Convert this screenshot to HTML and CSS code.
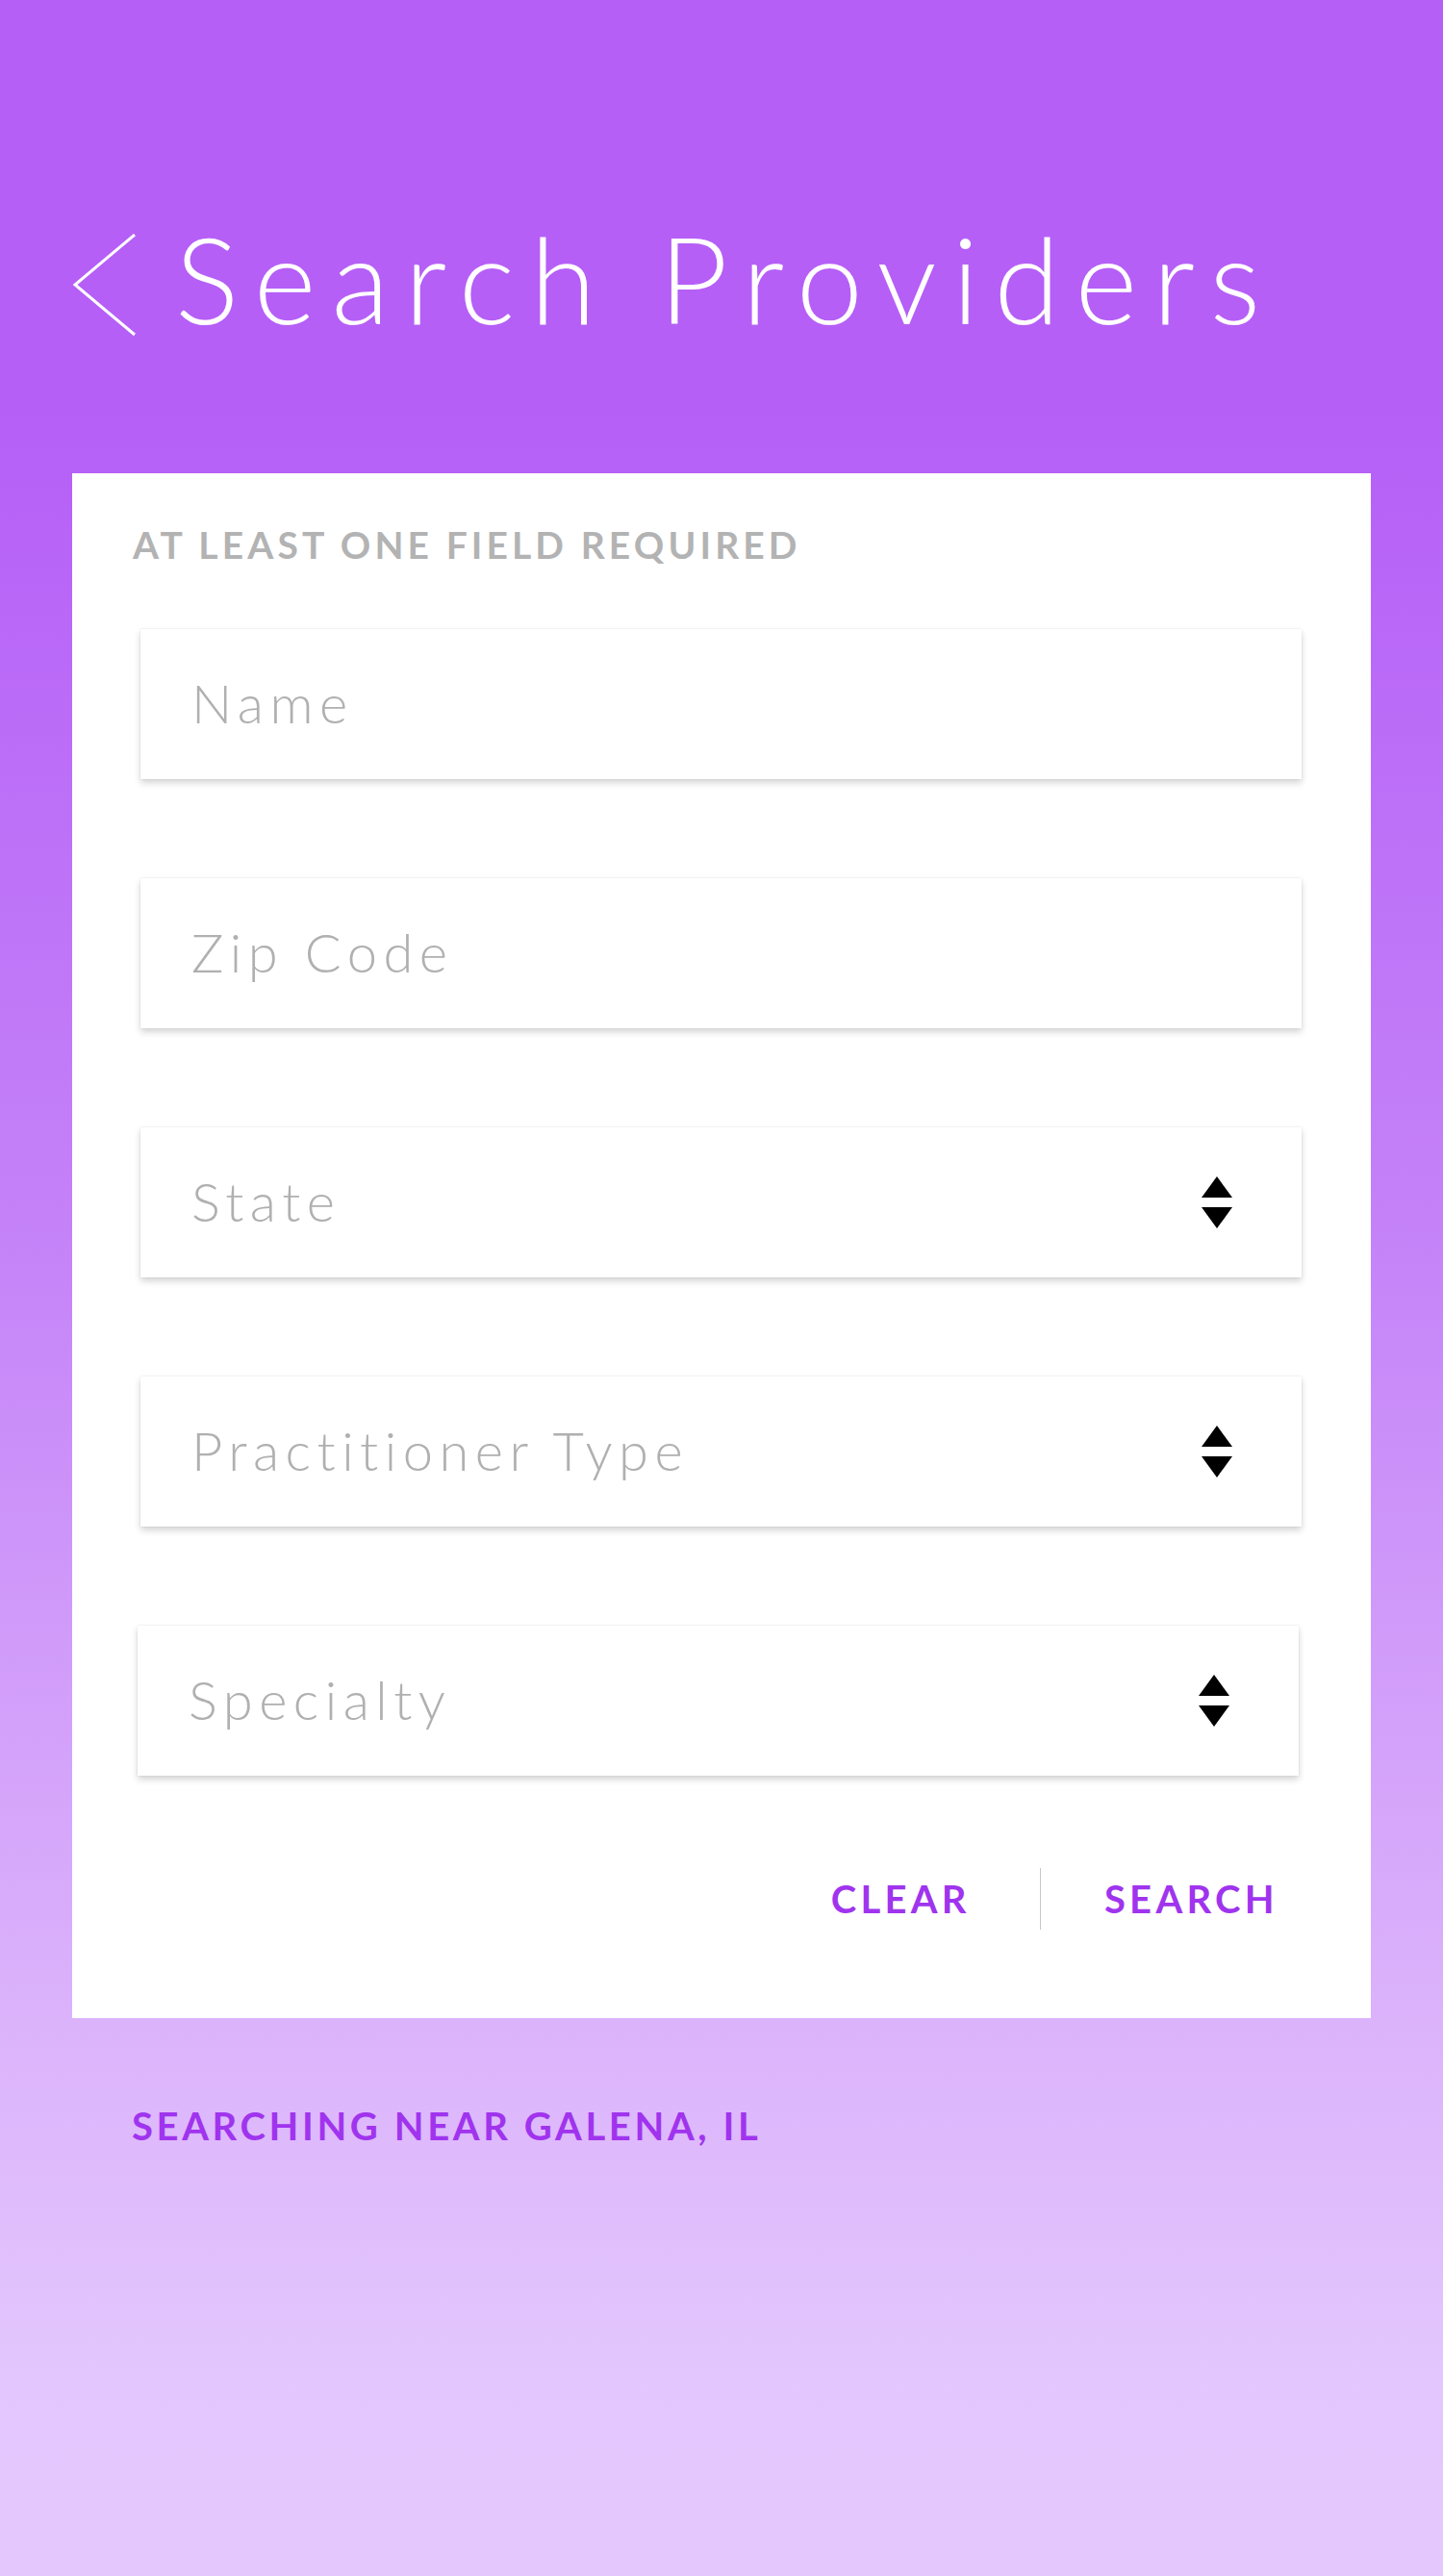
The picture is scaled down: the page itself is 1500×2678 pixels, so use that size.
FILE: index.html
```html
<!DOCTYPE html>
<html lang="en">
<head>
<meta charset="utf-8">
<title>Search Providers</title>
<link rel="stylesheet" href="styles.css">
</head>
<body>
<div class="page">
  <header class="header">
    <svg class="back" width="68" height="108" viewBox="0 0 68 108" aria-hidden="true">
      <polyline points="65,1 3,53 65,105" fill="none" stroke="#ffffff" stroke-width="3"/>
    </svg>
    <h1 class="title">Search Providers</h1>
  </header>

  <section class="card">
    <p class="card-label">AT LEAST ONE FIELD REQUIRED</p>
    <div class="fields">
      <div class="field"><span class="placeholder">Name</span></div>
      <div class="field"><span class="placeholder">Zip Code</span></div>
      <div class="field field--select"><span class="placeholder">State</span>
        <svg class="updown" width="32" height="54" viewBox="0 0 32 54" aria-hidden="true"><polygon points="16,0 32,22 0,22"/><polygon points="0,32 32,32 16,54"/></svg>
      </div>
      <div class="field field--select"><span class="placeholder">Practitioner Type</span>
        <svg class="updown" width="32" height="54" viewBox="0 0 32 54" aria-hidden="true"><polygon points="16,0 32,22 0,22"/><polygon points="0,32 32,32 16,54"/></svg>
      </div>
      <div class="field field--select field--nudge"><span class="placeholder">Specialty</span>
        <svg class="updown" width="32" height="54" viewBox="0 0 32 54" aria-hidden="true"><polygon points="16,0 32,22 0,22"/><polygon points="0,32 32,32 16,54"/></svg>
      </div>
    </div>
    <div class="actions">
      <span class="action">CLEAR</span>
      <span class="divider"></span>
      <span class="action">SEARCH</span>
    </div>
  </section>

  <p class="near">SEARCHING NEAR GALENA, IL</p>
</div>
</body>
</html>
```

FILE: styles.css
```css
html, body {
  margin: 0;
  padding: 0;
}

body {
  width: 1500px;
  min-height: 2678px;
  background: linear-gradient(to bottom, #b55ff7 0%, #b55ff7 16%, #c481f8 47%, #dbb2fb 78%, #e3c6fd 92%, #e4c8fd 100%);
  font-family: Lato, "Open Sans", "Liberation Sans", sans-serif;
}

.page {
  width: 1500px;
  min-height: 2678px;
  overflow: hidden;
}

.header {
  display: flex;
  align-items: flex-start;
  padding: 227px 0 0 75px;
}

.back {
  display: block;
  margin-top: 16px;
  flex: none;
}

.title {
  margin: 0 0 0 39px;
  font-family: Lato, "Open Sans", sans-serif;
  font-weight: 300;
  font-size: 124px;
  line-height: 124px;
  letter-spacing: 16px;
  color: #ffffff;
  white-space: nowrap;
}

.card {
  box-sizing: border-box;
  width: 1350px;
  height: 1606px;
  margin: 141px 0 0 75px;
  padding: 55px 72px 0 63px;
  background: #ffffff;
}

.card-label {
  margin: 0;
  font-weight: 700;
  font-size: 39px;
  line-height: 39px;
  letter-spacing: 4.1px;
  color: #b3b3b3;
}

.fields {
  display: flex;
  flex-direction: column;
  gap: 103px;
  margin-top: 68px;
  padding-left: 8px;
}

.field {
  box-sizing: border-box;
  display: flex;
  align-items: center;
  justify-content: space-between;
  width: 1207px;
  height: 156px;
  padding: 0 72px 3px 53px;
  background: #ffffff;
  box-shadow: 0 4px 7px rgba(0, 0, 0, 0.17), 0 0 2px rgba(0, 0, 0, 0.10);
}

.field--nudge {
  margin-left: -3px;
}

.placeholder {
  font-weight: 300;
  font-size: 56px;
  letter-spacing: 6.5px;
  color: #b0b0b0;
}

.updown {
  display: block;
  fill: #000000;
  margin-top: 3px;
}

.actions {
  display: flex;
  align-items: center;
  justify-content: flex-end;
  height: 64px;
  margin-top: 96px;
  padding-right: 24px;
}

.action {
  font-weight: 700;
  font-size: 40px;
  line-height: 40px;
  letter-spacing: 4.3px;
  color: #a034ee;
}

.divider {
  width: 1px;
  height: 64px;
  margin: 0 66px 0 72px;
  background: #c8c8c8;
}

.near {
  margin: 92px 0 0 137px;
  font-weight: 700;
  font-size: 40px;
  line-height: 40px;
  letter-spacing: 3.6px;
  color: #a034ee;
}
```
